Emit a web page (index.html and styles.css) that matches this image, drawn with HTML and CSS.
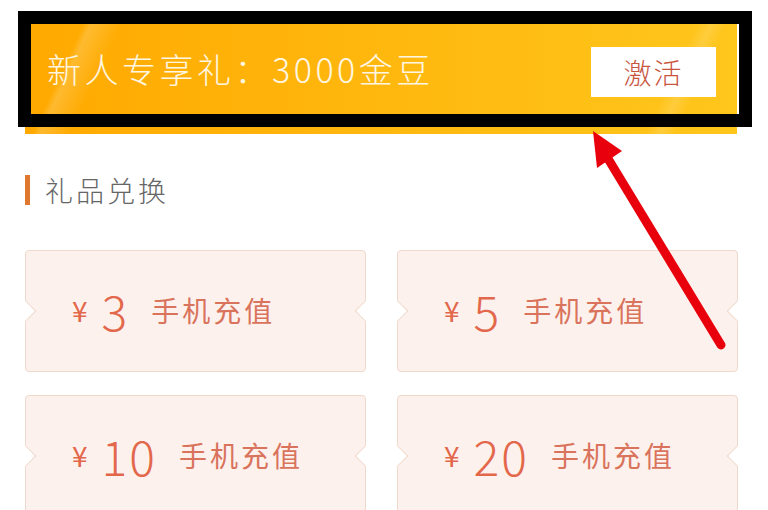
FILE: index.html
```html
<!DOCTYPE html>
<html>
<head>
  <meta charset="utf-8">
  <title>礼品兑换</title>
  <link rel="stylesheet" href="styles.css">
</head>
<body>
  <div class="page">
    <div class="banner">
      <div class="bannerText">新人专享礼：3000金豆</div>
      <button class="btnActive">激活</button>
    </div>

    <div class="sectionTitle"><span class="bar"></span>礼品兑换</div>

    <div class="giftList">
      <div class="gift"><span class="yen">¥</span><span class="amount">3</span><span class="label">手机充值</span></div>
      <div class="gift"><span class="yen">¥</span><span class="amount">5</span><span class="label">手机充值</span></div>
      <div class="gift"><span class="yen">¥</span><span class="amount">10</span><span class="label">手机充值</span></div>
      <div class="gift"><span class="yen">¥</span><span class="amount">20</span><span class="label">手机充值</span></div>
    </div>

    <!-- 标注 -->
    <div class="markFrame"></div>
    <svg class="markArrow" width="768" height="510" viewBox="0 0 768 510">
      <line x1="721" y1="345" x2="607" y2="157" stroke="#e8000c" stroke-width="9" stroke-linecap="round"/>
      <polygon points="593,131 622,151 597,168" fill="#e8000c"/>
    </svg>
  </div>
</body>
</html>
```

FILE: styles.css
```css
body {
  margin: 0;
  background-color: #fff;
  font-family: "Noto Sans CJK SC", "Noto Sans", sans-serif;
}
.page {
  position: relative;
  width: 768px;
  height: 510px;
  overflow: hidden;
  padding: 18px 31px 0 25px;
  box-sizing: border-box;
}
.banner {
  display: flex;
  align-items: center;
  justify-content: space-between;
  height: 116px;
  padding: 0 21px 8px 22px;
  box-sizing: border-box;
  background: linear-gradient(115deg, rgba(255,255,255,0) 8%, rgba(255,255,255,0.18) 9%, rgba(255,255,255,0) 13%, rgba(255,255,255,0) 88%, rgba(255,255,255,0.15) 90%, rgba(255,255,255,0) 92%),
              linear-gradient(90deg, #ffa900, #ffc61c);
}
.bannerText {
  margin-bottom: 8px;
  color: #fff6e2;
  font-size: 34px;
  font-weight: 300;
  letter-spacing: 3.5px;
}
.btnActive {
  border: 0;
  width: 125px;
  height: 50px;
  background-color: #fff;
  color: #c9553f;
  font-family: inherit;
  font-weight: 300;
  font-size: 28px;
  letter-spacing: 2px;
  padding: 0;
}
.sectionTitle {
  display: flex;
  align-items: center;
  gap: 15px;
  margin-top: 41px;
  height: 30px;
  color: #666;
  font-size: 28px;
  font-weight: 300;
  letter-spacing: 3px;
}
.sectionTitle .bar {
  width: 5px;
  height: 30px;
  background-color: #e0772f;
}
.giftList {
  display: grid;
  grid-template-columns: 341px 341px;
  column-gap: 31px;
  row-gap: 23px;
  margin-top: 45px;
}
.gift {
  position: relative;
  display: flex;
  align-items: center;
  height: 122px;
  padding-left: 46px;
  padding-bottom: 3px;
  box-sizing: border-box;
  background-color: #fdf1ed;
  border: 1px solid #efd9ca;
  border-radius: 4px;
  color: #e3674b;
}
/* 左右缺口 */
.gift::before, .gift::after {
  content: "";
  position: absolute;
  top: 50%;
  width: 14px;
  height: 14px;
  background-color: #fff;
  border: 1px solid #efd9ca;
  transform: translateY(-50%) rotate(45deg);
}
.gift::before {
  left: -9px;
  border-left-color: transparent;
  border-bottom-color: transparent;
}
.gift::after {
  right: -9px;
  border-right-color: transparent;
  border-top-color: transparent;
}
.yen {
  font-size: 28px;
  margin-right: 14px;
}
.amount {
  font-size: 48px;
  font-weight: 300;
  line-height: 1;
  letter-spacing: 2px;
  margin-right: 22px;
}
.label {
  font-size: 28px;
  letter-spacing: 3px;
  color: #d9735c;
}
.markFrame {
  position: absolute;
  left: 18px;
  top: 11px;
  width: 734px;
  height: 116px;
  border: 13px solid #000;
  box-sizing: border-box;
}
.markArrow {
  position: absolute;
  left: 0;
  top: 0;
}
```
